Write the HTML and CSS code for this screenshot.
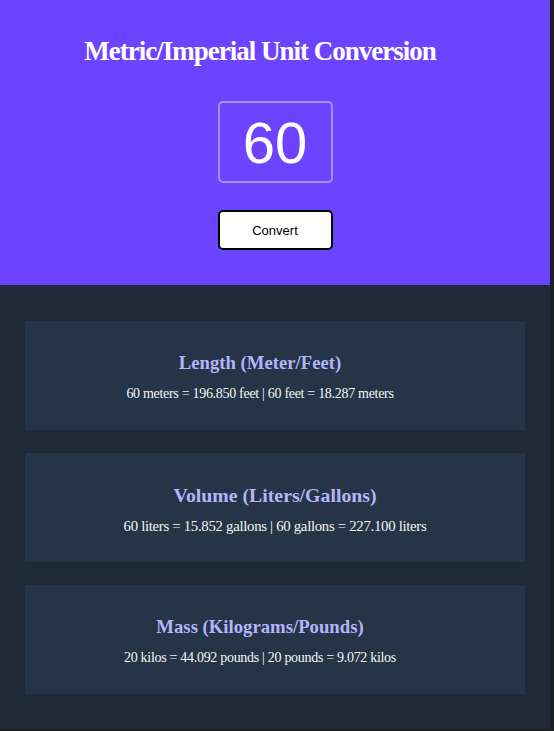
FILE: index.html
```html
<!DOCTYPE html>
<html>
<head>
<meta charset="utf-8">
<title>Unit Conversion</title>
<link rel="stylesheet" href="styles.css">
</head>
<body>
<div class="app">
  <header class="hero">
    <h1 class="title">Metric/Imperial Unit Conversion</h1>
    <input class="value" type="text" value="60">
    <button class="convert">Convert</button>
  </header>
  <main class="results">
    <section class="card">
      <h3 class="card-title">Length (Meter/Feet)</h3>
      <p class="card-text">60 meters = 196.850 feet | 60 feet = 18.287 meters</p>
    </section>
    <section class="card card-volume">
      <h3 class="card-title">Volume (Liters/Gallons)</h3>
      <p class="card-text">60 liters = 15.852 gallons | 60 gallons = 227.100 liters</p>
    </section>
    <section class="card">
      <h3 class="card-title">Mass (Kilograms/Pounds)</h3>
      <p class="card-text">20 kilos = 44.092 pounds | 20 pounds = 9.072 kilos</p>
    </section>
  </main>
</div>
</body>
</html>
```
FILE: styles.css
```css
html, body {
  margin: 0;
  padding: 0;
  background: #1e1f22;
}
.app {
  width: 550px;
  font-family: "Liberation Serif", "Times New Roman", serif;
}
.hero {
  background: #6c44ff;
  height: 285px;
  box-sizing: border-box;
  padding-top: 33px;
  display: flex;
  flex-direction: column;
  align-items: center;
}
.title {
  margin: 0;
  padding-right: 30px;
  color: #ffffff;
  font-size: 27px;
  letter-spacing: -1px;
  font-weight: bold;
  line-height: 37px;
}
.value {
  margin-top: 31px;
  width: 115px;
  height: 82px;
  box-sizing: border-box;
  border: 2px solid rgba(255, 255, 255, 0.4);
  border-radius: 5px;
  background: transparent;
  color: #ffffff;
  font-family: "Liberation Sans", Arial, sans-serif;
  font-size: 58px;
  text-align: center;
  padding: 0;
  outline: none;
}
.convert {
  margin-top: 27px;
  width: 115px;
  height: 40px;
  box-sizing: border-box;
  background: #ffffff;
  border: 2px solid #000000;
  border-radius: 5px;
  font-family: "Liberation Sans", Arial, sans-serif;
  font-size: 13px;
  color: #000000;
}
.results {
  background: #202938;
  padding: 36px 25px 35px;
  display: flex;
  flex-direction: column;
  gap: 23px;
}
.card {
  background: #263447;
  height: 109px;
  box-sizing: border-box;
  padding: 31px 30px 0 0;
  text-align: center;
}
.card-title {
  margin: 0;
  color: #b4b4fa;
  font-size: 18.72px;
  font-weight: bold;
  line-height: 22px;
}
.card-text {
  margin: 12px 0 0;
  color: #f4f4f4;
  font-size: 14px;
  letter-spacing: -0.3px;
  line-height: 16px;
}
.card-volume {
  padding-right: 0;
}
.card-volume .card-title {
  font-size: 19.8px;
}
.card-volume .card-text {
  font-size: 14.8px;
}
```
